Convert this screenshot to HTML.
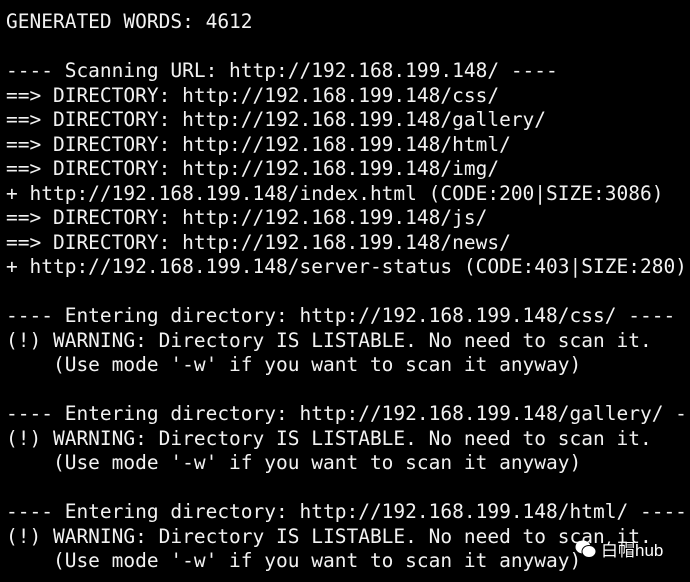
<!DOCTYPE html>
<html><head><style>
html,body{margin:0;padding:0;background:#000;width:690px;height:582px;overflow:hidden}
pre{margin:0;position:absolute;left:6px;top:10px;color:#f2f2f2;font-family:"DejaVu Sans Mono","Liberation Mono",monospace;font-size:19.5px;line-height:24.5px;white-space:pre}
.wm{position:absolute;left:575px;top:536px;color:#fff;font-family:"Liberation Sans","Noto Sans CJK SC",sans-serif;font-size:17px;display:flex;align-items:center;gap:4px}
</style></head><body>
<pre>GENERATED WORDS: 4612

---- Scanning URL: http://192.168.199.148/ ----
==> DIRECTORY: http://192.168.199.148/css/
==> DIRECTORY: http://192.168.199.148/gallery/
==> DIRECTORY: http://192.168.199.148/html/
==> DIRECTORY: http://192.168.199.148/img/
+ http://192.168.199.148/index.html (CODE:200|SIZE:3086)
==> DIRECTORY: http://192.168.199.148/js/
==> DIRECTORY: http://192.168.199.148/news/
+ http://192.168.199.148/server-status (CODE:403|SIZE:280)

---- Entering directory: http://192.168.199.148/css/ ----
(!) WARNING: Directory IS LISTABLE. No need to scan it.
    (Use mode '-w' if you want to scan it anyway)

---- Entering directory: http://192.168.199.148/gallery/ -
(!) WARNING: Directory IS LISTABLE. No need to scan it.
    (Use mode '-w' if you want to scan it anyway)

---- Entering directory: http://192.168.199.148/html/ ----
(!) WARNING: Directory IS LISTABLE. No need to scan it.
    (Use mode '-w' if you want to scan it anyway)</pre>
<div class="wm"><svg width="22" height="20" viewBox="0 0 22 20"><ellipse cx="8" cy="8" rx="7.5" ry="6.5" fill="#fff"/><ellipse cx="14" cy="12.5" rx="7" ry="6" fill="#fff" stroke="#000" stroke-width="1"/></svg><span>白帽hub</span></div>
</body></html>
